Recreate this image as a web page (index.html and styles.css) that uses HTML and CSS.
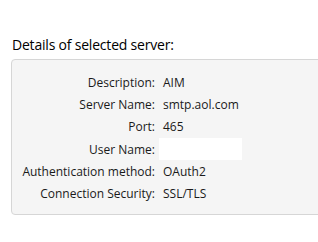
FILE: index.html
```html
<!DOCTYPE html>
<html>
<head>
    <title>Server details</title>
    <meta name="viewport" content="width=device-width, initial-scale=1.0">
    <link rel="stylesheet" href="styles.css">
</head>
<body>
    <div class="details">
        <h2 class="details-title">Details of selected server:</h2>
        <div class="details-box">
            <div class="label">Description:</div>
            <div class="value">AIM</div>
            <div class="label">Server Name:</div>
            <div class="value">smtp.aol.com</div>
            <div class="label">Port:</div>
            <div class="value">465</div>
            <div class="label">User Name:</div>
            <div class="value"><input type="text" class="user-input"></div>
            <div class="label">Authentication method:</div>
            <div class="value">OAuth2</div>
            <div class="label">Connection Security:</div>
            <div class="value">SSL/TLS</div>
        </div>
    </div>
</body>
</html>
```

FILE: styles.css
```css
body {
    margin: 0;
    overflow: hidden;
    background-color: white;
    color: #1a1a1a;
    font-family: 'Open Sans', sans-serif;
    font-size: 12px;
}

.details {
    padding-top: 35px;
    overflow: hidden;
}

.details-title {
    margin: 0 0 4px 12px;
    font-size: 14px;
    font-weight: normal;
    line-height: 20px;
    letter-spacing: -0.2px;
    color: black;
}

.details-box {
    display: grid;
    grid-template-columns: 143px 1fr;
    grid-auto-rows: 22.3px;
    align-items: center;
    margin-left: 11px;
    margin-right: -20px;
    padding: 11px 0 9px;
    background-color: #f5f5f5;
    border: 1px solid #d6d6d6;
    border-radius: 4px;
}

.label {
    text-align: right;
}

.value {
    padding-left: 8px;
}

.user-input {
    display: block;
    width: 83px;
    height: 22px;
    margin-left: -4px;
    padding: 0 4px;
    box-sizing: border-box;
    border: none;
    background-color: white;
    font-family: inherit;
    font-size: 12px;
}
```
